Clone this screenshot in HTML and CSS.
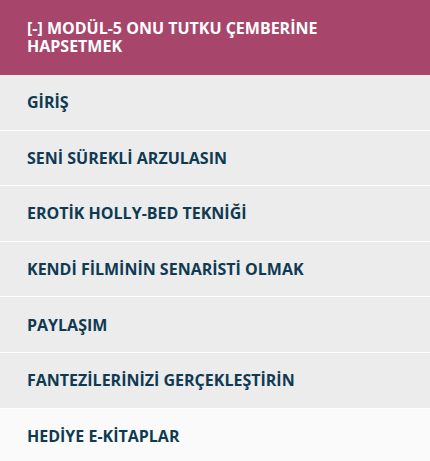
FILE: index.html
```html
<!DOCTYPE html>
<html lang="tr">
<head>
<meta charset="utf-8">
<link rel="stylesheet" href="styles.css">
</head>
<body>
<div class="menu">
  <div class="menu-head">[-] MODÜL-5 ONU TUTKU ÇEMBERİNE HAPSETMEK</div>
  <ul class="menu-list">
    <li class="menu-item">GİRİŞ</li>
    <li class="menu-item">SENİ SÜREKLİ ARZULASIN</li>
    <li class="menu-item">EROTİK HOLLY-BED TEKNİĞİ</li>
    <li class="menu-item">KENDİ FİLMİNİN SENARİSTİ OLMAK</li>
    <li class="menu-item">PAYLAŞIM</li>
    <li class="menu-item">FANTEZİLERİNİZİ GERÇEKLEŞTİRİN</li>
    <li class="menu-item menu-item-last">HEDİYE E-KİTAPLAR</li>
  </ul>
</div>
</body>
</html>
```
FILE: styles.css
```css
html, body {
  margin: 0;
  padding: 0;
  background: #fafafa;
}
body {
  font-family: "Open Sans", "DejaVu Sans", sans-serif;
  font-weight: 700;
}
.menu {
  width: 430px;
}
.menu-head {
  background: #a8456b;
  color: #ffffff;
  font-size: 16px;
  line-height: 18px;
  padding: 19px 90px 20px 27px;
  height: 36px;
}
.menu-list {
  list-style: none;
  margin: 0;
  padding: 0;
}
.menu-item {
  background: #ececec;
  color: #0f3a52;
  font-size: 16px;
  line-height: 20px;
  padding: 17.3px 27px;
  border-bottom: 1px solid #ffffff;
}
.menu-item-last {
  background: #fafafa;
  border-bottom: none;
}
```
